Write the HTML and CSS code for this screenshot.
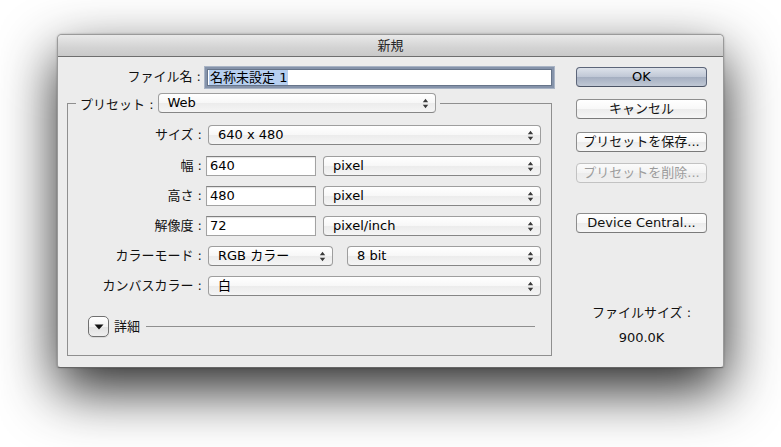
FILE: index.html
```html
<!DOCTYPE html>
<html lang="ja">
<head>
<meta charset="utf-8">
<title>新規</title>
<link rel="stylesheet" href="styles.css">
</head>
<body>
<div class="screen">
  <div class="window">
    <div class="titlebar">新規</div>
    <div class="body">
      <div class="main">
        <div class="row">
          <span class="lbl">ファイル名 :</span>
          <div class="field focus"><span class="sel">名称未設定 1</span></div>
        </div>
        <fieldset class="group">
          <legend class="legend">
            <span class="legend-in">
              <span class="legend-lbl">プリセット :</span>
              <span class="popup w-preset"><span>Web</span><svg class="arr" width="7" height="11" viewBox="0 0 7 11"><path d="M3.5 0.8L6.2 4.3H0.8Z M3.5 10.2L6.2 6.7H0.8Z" fill="#3a3a3a"/></svg></span>
            </span>
          </legend>
          <div class="rows">
            <div class="row r-size">
              <span class="lbl">サイズ :</span>
              <span class="popup w-full"><span>640 x 480</span><svg class="arr" width="7" height="11" viewBox="0 0 7 11"><path d="M3.5 0.8L6.2 4.3H0.8Z M3.5 10.2L6.2 6.7H0.8Z" fill="#3a3a3a"/></svg></span>
            </div>
            <div class="row">
              <span class="lbl">幅 :</span>
              <span class="field w-num">640</span>
              <span class="popup w-unit"><span>pixel</span><svg class="arr" width="7" height="11" viewBox="0 0 7 11"><path d="M3.5 0.8L6.2 4.3H0.8Z M3.5 10.2L6.2 6.7H0.8Z" fill="#3a3a3a"/></svg></span>
            </div>
            <div class="row">
              <span class="lbl">高さ :</span>
              <span class="field w-num">480</span>
              <span class="popup w-unit"><span>pixel</span><svg class="arr" width="7" height="11" viewBox="0 0 7 11"><path d="M3.5 0.8L6.2 4.3H0.8Z M3.5 10.2L6.2 6.7H0.8Z" fill="#3a3a3a"/></svg></span>
            </div>
            <div class="row">
              <span class="lbl">解像度 :</span>
              <span class="field w-num">72</span>
              <span class="popup w-unit"><span>pixel/inch</span><svg class="arr" width="7" height="11" viewBox="0 0 7 11"><path d="M3.5 0.8L6.2 4.3H0.8Z M3.5 10.2L6.2 6.7H0.8Z" fill="#3a3a3a"/></svg></span>
            </div>
            <div class="row">
              <span class="lbl">カラーモード :</span>
              <span class="popup w-mode"><span>RGB カラー</span><svg class="arr" width="7" height="11" viewBox="0 0 7 11"><path d="M3.5 0.8L6.2 4.3H0.8Z M3.5 10.2L6.2 6.7H0.8Z" fill="#3a3a3a"/></svg></span>
              <span class="popup w-bit"><span>8 bit</span><svg class="arr" width="7" height="11" viewBox="0 0 7 11"><path d="M3.5 0.8L6.2 4.3H0.8Z M3.5 10.2L6.2 6.7H0.8Z" fill="#3a3a3a"/></svg></span>
            </div>
            <div class="row">
              <span class="lbl">カンバスカラー :</span>
              <span class="popup w-full"><span>白</span><svg class="arr" width="7" height="11" viewBox="0 0 7 11"><path d="M3.5 0.8L6.2 4.3H0.8Z M3.5 10.2L6.2 6.7H0.8Z" fill="#3a3a3a"/></svg></span>
            </div>
          </div>
          <div class="detail">
            <span class="disc"><svg width="10" height="6" viewBox="0 0 10 6"><path d="M0.5 0.5H9.5L5 5.6Z" fill="#111"/></svg></span>
            <span class="detail-lbl">詳細</span>
            <span class="detail-line"></span>
          </div>
        </fieldset>
      </div>
      <div class="side">
        <div class="btn btn-ok">OK</div>
        <div class="btn b-cancel">キャンセル</div>
        <div class="btn b-save">プリセットを保存...</div>
        <div class="btn b-del disabled">プリセットを削除...</div>
        <div class="btn b-dc">Device Central...</div>
        <div class="fs-lbl">ファイルサイズ :</div>
        <div class="fs-val">900.0K</div>
      </div>
    </div>
  </div>
</div>
</body>
</html>
```

FILE: styles.css
```css
* { box-sizing: border-box; }
html, body { margin: 0; padding: 0; background: #fff; }
body {
  font-family: "DejaVu Sans", "Noto Sans CJK JP", sans-serif;
  font-size: 13px;
  color: #000;
}
.screen {
  width: 781px;
  height: 447px;
  padding: 34px 0 0 57px;
  overflow: hidden;
}
.window {
  width: 667px;
  height: 334px;
  background: #ececec;
  border: 1px solid #9a9a9a;
  border-bottom-color: #666;
  border-radius: 5px 5px 3px 3px;
  box-shadow: 0 22px 56px rgba(0,0,0,.85), 0 0 2px rgba(0,0,0,.3);
  display: flex;
  flex-direction: column;
}
.titlebar {
  height: 22px;
  flex: none;
  border-bottom: 1px solid #6e6e6e;
  border-radius: 4px 4px 0 0;
  background: linear-gradient(#e9e9e9, #d3d3d3 60%, #c9c9c9);
  text-align: center;
  line-height: 21px;
  color: #262626;
}
.body { display: flex; flex: 1; }
.main { width: 518px; padding: 10px 0 0 9px; }
.side {
  width: 131px;
  padding-top: 10px;
  display: flex;
  flex-direction: column;
}
.row {
  display: flex;
  align-items: center;
  height: 20px;
}
.lbl {
  width: 134px;
  flex: none;
  text-align: right;
  margin-right: 4px;
  white-space: nowrap;
  color: #111;
  line-height: 20px;
}
.field {
  height: 20px;
  background: #fff;
  border: 1px solid #a3a3a3;
  border-top-color: #808080;
  box-shadow: inset 0 1px 1px rgba(0,0,0,.12);
  padding-left: 3px;
  line-height: 18px;
  white-space: nowrap;
}
.field.focus {
  width: 349px;
  height: 21px;
  border: 2px solid #8593aa;
  box-shadow: 0 0 0 1px #67758a inset, 0 0 0 1px #a9b4c5;
  padding-left: 2px;
  line-height: 16px;
}
.sel {
  display: inline-block;
  background: #b6cff0;
  padding: 0 1px;
  line-height: 15px;
  margin-top: 1px;
}
.group {
  margin: 6px 0 0 0;
  width: 485px;
  border: 1px solid #8f8f8f;
  padding: 12px 0 18px 0;
  min-width: 0;
}
.legend {
  margin-left: 8px;
  padding: 0 4px;
}
.legend-in { display: flex; align-items: center; height: 20px; }
.legend-lbl { margin-right: 4px; color: #111; white-space: nowrap; }
.popup {
  height: 20px;
  margin-left: 2px;
  border: 1px solid #9e9e9e;
  border-bottom-color: #868686;
  border-radius: 4px;
  background: linear-gradient(#ffffff, #f7f7f7 50%, #ececec 52%, #f5f5f5);
  display: flex;
  align-items: center;
  justify-content: space-between;
  padding: 0 6px 0 9px;
  line-height: 18px;
  white-space: nowrap;
  flex: none;
}
.legend-in .popup { margin-left: 0; }
.arr { display: block; flex: none; }
.w-preset { width: 278px; }
.w-full { width: 333px; }
.w-num { width: 110px; margin-right: 5px; }
.w-unit { width: 218px; }
.w-mode { width: 125px; margin-right: 14px; }
.w-bit { width: 194px; margin-left: 0; }
.rows {
  display: flex;
  flex-direction: column;
  gap: 10px;
}
.r-size { margin-bottom: 1px; }
.detail {
  display: flex;
  align-items: center;
  margin-top: 20px;
  padding-left: 20px;
  height: 21px;
}
.disc {
  width: 21px;
  height: 21px;
  border: 1px solid #707070;
  border-radius: 5px;
  background: linear-gradient(#ffffff, #f2f2f2 50%, #e2e2e2 52%, #eeeeee);
  box-shadow: 0 1px 0 rgba(0,0,0,.08);
  display: flex;
  align-items: center;
  justify-content: center;
  flex: none;
}
.disc svg { display: block; margin-top: 1px; }
.detail-lbl { margin-left: 5px; line-height: 20px; color: #111; }
.detail-line {
  flex: none;
  width: 389px;
  height: 1px;
  background: #8f8f8f;
  margin-left: 6px;
}
.btn {
  height: 20px;
  border: 1px solid #8d8d8d;
  border-bottom-color: #7a7a7a;
  border-radius: 4px;
  background: linear-gradient(#ffffff, #f8f8f8 50%, #ececec 52%, #f6f6f6);
  text-align: center;
  line-height: 18px;
  white-space: nowrap;
  color: #111;
}
.btn-ok {
  border-color: #5c6579;
  border-bottom-color: #4c5465;
  background: linear-gradient(#dde2ea, #c0c8d6 48%, #a5afc1 52%, #c0c8d5);
  color: #000;
}
.b-cancel { margin-top: 12px; }
.b-save { margin-top: 13px; }
.b-del { margin-top: 11px; }
.b-dc { margin-top: 30px; }
.disabled {
  color: #9c9c9c;
  border-color: #c2c2c2;
  background: linear-gradient(#fbfbfb, #f3f3f3 50%, #ececec 52%, #f0f0f0);
}
.fs-lbl {
  margin-top: 72px;
  text-align: center;
  line-height: 16px;
  color: #111;
}
.fs-val {
  margin-top: 9px;
  text-align: center;
  line-height: 16px;
  color: #111;
}
```
